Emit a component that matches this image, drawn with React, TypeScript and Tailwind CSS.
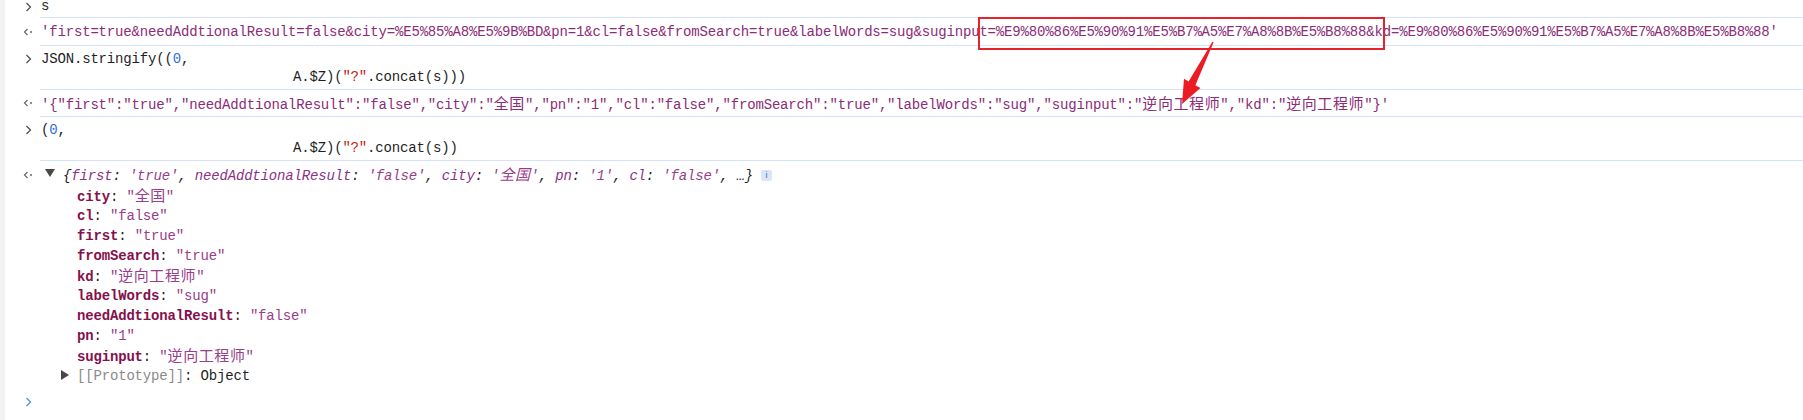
import React from 'react';

const CJK = /([\u4e00-\u9fff]+)/;

const Cjk = ({ children }: { children: React.ReactNode }) => (
  <span className="text-[15px] leading-[18px] tracking-[0.6px] font-['Noto_Sans_CJK_SC',sans-serif]">{children}</span>
);

const txt = (s: string) =>
  s.split(CJK).map((p, i) => (CJK.test(p) ? <Cjk key={i}>{p}</Cjk> : <React.Fragment key={i}>{p}</React.Fragment>));

const PromptIcon = ({ blue }: { blue?: boolean }) => (
  <svg width="7" height="10" viewBox="0 0 7 10" className="block">
    <path d="M1.5 1 L5.5 5 L1.5 9" fill="none" stroke={blue ? '#4a8af0' : '#4a4a4a'} strokeWidth="1.2" />
  </svg>
);

const ResultIcon = () => (
  <svg width="10" height="10" viewBox="0 0 10 10" className="block">
    <path d="M4.5 2 L1.5 5 L4.5 8" fill="none" stroke="#666" strokeWidth="1.2" />
    <circle cx="8" cy="5" r="1" fill="#666" />
  </svg>
);

type RowProps = {
  icon: React.ReactNode;
  iconPad: string;
  pad: string;
  h: string;
  children: React.ReactNode;
};

// one console entry: gutter icon + content with the divider below
const Row = ({ icon, iconPad, pad, h, children }: RowProps) => (
  <div className={`flex ${h} shrink-0`}>
    <div className={`w-[35px] shrink-0 ${pad}`}>
      <div className={`h-[18px] flex items-center ${iconPad}`}>{icon}</div>
    </div>
    <div className={`flex-1 pl-px ${pad} border-b border-[#d6e2fb]`}>{children}</div>
  </div>
);

const Line = ({ className = '', children }: { className?: string; children: React.ReactNode }) => (
  <div className={`h-[18px] leading-[18px] ${className}`}>{children}</div>
);

const Key = ({ k }: { k: string }) => <span className="font-bold text-[#85104c]">{k}</span>;
const Str = ({ v }: { v: string }) => <span className="text-[#983d89]">"{txt(v)}"</span>;

const props: [string, string][] = [
  ['city', '全国'],
  ['cl', 'false'],
  ['first', 'true'],
  ['fromSearch', 'true'],
  ['kd', '逆向工程师'],
  ['labelWords', 'sug'],
  ['needAddtionalResult', 'false'],
  ['pn', '1'],
  ['suginput', '逆向工程师'],
];

const SumKey = ({ k }: { k: string }) => <span className="text-[#8a3287]">{k}</span>;
const SumVal = ({ v }: { v: string }) => <span className="text-[#983d89]">'{txt(v)}'</span>;

const App = (): JSX.Element => {
  return (
    <div className="relative w-[1803px] h-[420px] overflow-hidden bg-white text-[#1f1f1f] text-[14px] tracking-[-0.17px] font-['Liberation_Mono','Noto_Sans_CJK_SC',monospace] whitespace-pre">
      <div className="flex h-full">
        <div className="w-[5px] shrink-0 bg-[#f1f3f4]" />
        <div className="flex-1 flex flex-col">
          <div className="flex h-[18px] shrink-0">
            <div className="w-[35px] shrink-0 h-[14px] flex items-center pl-[20px]">
              <PromptIcon />
            </div>
            <div className="flex-1 pl-px leading-[13px] border-b border-[#d6e2fb]">s</div>
          </div>

          <Row icon={<ResultIcon />} iconPad="pl-[18px]" pad="pt-[5px]" h="h-[28px]">
            <Line className="text-[#8c2c78]">
              'first=true&needAddtionalResult=false&city=%E5%85%A8%E5%9B%BD&pn=1&cl=false&fromSearch=true&labelWords=sug&suginput=%E9%80%86%E5%90%91%E5%B7%A5%E7%A8%8B%E5%B8%88&kd=%E9%80%86%E5%90%91%E5%B7%A5%E7%A8%8B%E5%B8%88'
            </Line>
          </Row>

          <Row icon={<PromptIcon />} iconPad="pl-[20px]" pad="pt-[4px]" h="h-[44px]">
            <Line>
              JSON.stringify((<span className="text-[#2f6fd8]">0</span>,
            </Line>
            <Line className="ml-[252px]">
              A.$Z)(<span className="text-[#c41a16]">"?"</span>.concat(s)))
            </Line>
          </Row>

          <Row icon={<ResultIcon />} iconPad="pl-[18px]" pad="pt-[4px]" h="h-[27px]">
            <Line className="text-[#8c2c78]">
              {txt(
                `'{"first":"true","needAddtionalResult":"false","city":"全国","pn":"1","cl":"false","fromSearch":"true","labelWords":"sug","suginput":"逆向工程师","kd":"逆向工程师"}'`
              )}
            </Line>
          </Row>

          <Row icon={<PromptIcon />} iconPad="pl-[20px]" pad="pt-[4px]" h="h-[44px]">
            <Line>
              (<span className="text-[#2f6fd8]">0</span>,
            </Line>
            <Line className="ml-[252px]">
              A.$Z)(<span className="text-[#c41a16]">"?"</span>.concat(s))
            </Line>
          </Row>

          <div className="flex pt-[4px]">
            <div className="w-[35px] shrink-0">
              <div className="h-[20px] flex items-center pl-[18px]">
                <ResultIcon />
              </div>
            </div>
            <div className="flex-1">
              <div className="h-[20px] flex items-center">
                <svg width="10" height="8" viewBox="0 0 10 8" className="ml-[5px] -mt-[4px]">
                  <path d="M0 0 H10 L5 8 Z" fill="#474747" />
                </svg>
                <span className="ml-[8px] italic h-[20px] leading-[20px]">
                  {'{'}
                  <SumKey k="first" />: <SumVal v="true" />, <SumKey k="needAddtionalResult" />: <SumVal v="false" />,{' '}
                  <SumKey k="city" />: <SumVal v="全国" />, <SumKey k="pn" />: <SumVal v="1" />, <SumKey k="cl" />:{' '}
                  <SumVal v="false" />, …{'}'}
                </span>
                <span className="ml-[8px] w-[11px] h-[11px] rounded-[2px] bg-[#dbe5f7] text-[#3b6fd0] text-[9px] leading-[11px] text-center font-['Liberation_Sans',sans-serif] not-italic">
                  i
                </span>
              </div>
              <div className="pl-[37px] mt-px">
                {props.map(([k, v]) => (
                  <div key={k} className="leading-[20px] h-[20px]">
                    <Key k={k} />: <Str v={v} />
                  </div>
                ))}
                <div className="leading-[20px] h-[20px] flex items-center -ml-[16px]">
                  <svg width="8" height="10" viewBox="0 0 8 10" className="-mt-[3px]">
                    <path d="M0 0 L8 5 L0 10 Z" fill="#474747" />
                  </svg>
                  <span className="ml-[8px] text-[#8a8a8a]">[[Prototype]]</span>
                  <span>: Object</span>
                </div>
              </div>
              <div className="h-[20px] mt-[6px] -ml-[15px] flex items-center">
                <PromptIcon blue />
              </div>
            </div>
          </div>
        </div>
      </div>

      <div className="absolute left-[978px] top-[17px] w-[407px] h-[33px] border-2 border-[#e8222a] pointer-events-none" />
      <svg className="absolute inset-0 pointer-events-none" width="1803" height="420">
        <polygon
          points="1213.6,42.3 1195.4,85.2 1200.5,88 1182,104 1184,78.8 1188.6,81.6 1212.4,41.7"
          fill="#ec1c24"
        />
      </svg>
    </div>
  );
};

export default App;
